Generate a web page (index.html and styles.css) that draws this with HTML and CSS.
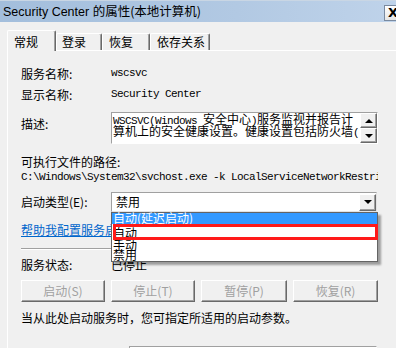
FILE: index.html
```html
<!DOCTYPE html>
<html>
<head>
<meta charset="utf-8">
<link rel="stylesheet" href="styles.css">
</head>
<body>
<div class="window">
  <div class="titlebar">
    <span class="title"><span class="latin">Security Center </span>的属性(本地计算机)</span>
    <span class="close">X</span>
  </div>
  <div class="tabs">
    <div class="tab active">常规</div>
    <div class="tab t2">登录</div>
    <div class="tab t3">恢复</div>
    <div class="tab t4">依存关系</div>
  </div>
  <div class="panel">
    <div class="row"><span class="label">服务名称:</span><span class="mono">wscsvc</span></div>
    <div class="row"><span class="label">显示名称:</span><span class="mono">Security Center</span></div>
    <div class="desc-row">
      <span class="label desc-label">描述:</span>
      <div class="desc-box">
        <div class="desc-text">
          <div class="line"><span class="mono-s">WSCSVC(Windows </span>安全中心<span class="mono-s">)</span>服务监视并报告计</div>
          <div class="line">算机上的安全健康设置。健康设置包括防火墙<span class="mono-s">(</span></div>
        </div>
        <div class="scroll">
          <div class="sbtn"><span class="tri-up"></span></div>
          <div class="sbtn"><span class="tri-down"></span></div>
        </div>
      </div>
    </div>
    <div class="path-label">可执行文件的路径:</div>
    <div class="path mono">C:\Windows\System32\svchost.exe -k LocalServiceNetworkRestricted</div>
    <div class="combo-row">
      <span class="label">启动类型(E):</span>
      <div class="combo">
        <span class="combo-text">禁用</span>
        <div class="combo-btn"><span class="tri-down"></span></div>
      </div>
    </div>
    <div class="link">帮助我配置服务启动选项。</div>
    <div class="sep"></div>
    <div class="status-row"><span class="label">服务状态:</span><span>已停止</span></div>
    <div class="buttons">
      <div class="btn w84">启动(S)</div>
      <div class="btn w84">停止(T)</div>
      <div class="btn w86">暂停(P)</div>
      <div class="btn w85">恢复(R)</div>
    </div>
    <div class="note">当从此处启动服务时，您可指定所适用的启动参数。</div>
    <div class="param-box"></div>
  </div>
  <div class="dropdown">
    <div class="item selected">自动(延迟启动)</div>
    <div class="item i2">自动</div>
    <div class="item i3">手动</div>
    <div class="item i4">禁用</div>
  </div>
  <div class="highlight-box"></div>
</div>
</body>
</html>
```

FILE: styles.css
```css
html, body {
  margin: 0;
  padding: 0;
  background: #f0f0f0;
  overflow: hidden;
}
body {
  font-family: "Noto Sans CJK SC", "Noto Sans", sans-serif;
  font-size: 12px;
  color: #000;
  width: 396px;
  height: 348px;
}
.window {
  position: relative;
  width: 396px;
  height: 348px;
  overflow: hidden;
}
.titlebar {
  height: 22px;
  background: linear-gradient(to right, #a3bedc, #b2c9e3 60%, #bfd3ea);
  border-top: 1px solid #c9d6e4;
  box-sizing: border-box;
  display: flex;
  align-items: center;
  justify-content: space-between;
}
.title {
  padding-left: 3px;
  line-height: 20px;
  font-size: 12.5px;
  white-space: nowrap;
}
.title .latin {
  font-family: "Liberation Sans", sans-serif;
  font-size: 12.5px;
}
.close {
  width: 16px;
  height: 16px;
  margin-top: 2px;
  margin-right: -4px;
  box-sizing: border-box;
  border: 1px solid #7a8aa0;
  background: linear-gradient(#ffffff, #e6e6e6);
  font-family: "DejaVu Sans", sans-serif;
  font-weight: bold;
  font-size: 13px;
  line-height: 14px;
  text-align: center;
  padding-left: 2px;
}
.tabs {
  display: flex;
  align-items: flex-end;
  height: 28px;
  padding-left: 7px;
  position: relative;
  z-index: 2;
}
.tab {
  box-sizing: border-box;
  height: 17px;
  line-height: 16px;
  border-top: 1px solid #fff;
  border-left: 1px solid #fff;
  border-right: 1px solid #696969;
  box-shadow: inset -1px 0 #a0a0a0;
  border-radius: 2px 2px 0 0;
  padding-left: 5px;
  background: #f0f0f0;
  white-space: nowrap;
}
.tab.active {
  width: 49px;
  height: 21px;
  padding-top: 3px;
  padding-left: 6px;
  margin-bottom: -1px;
}
.tab.t2 { width: 46px; }
.tab.t3 { width: 48px; padding-left: 6px; }
.tab.t4 { width: 60px; padding-left: 6px; }

.panel {
  margin-left: 7px;
  width: 400px;
  height: 300px;
  box-sizing: border-box;
  border-top: 1px solid #fff;
  border-left: 1px solid #fff;
  padding: 12px 0 0 13px;
}
.row {
  display: flex;
  height: 21px;
  line-height: 21px;
}
.label {
  width: 90px;
  flex: none;
  white-space: nowrap;
}
.mono {
  font-family: "Liberation Mono", monospace;
  font-size: 11px;
  letter-spacing: -0.6px;
}
.mono-s {
  font-family: "Liberation Mono", monospace;
  font-size: 11px;
  letter-spacing: -0.6px;
}
.desc-row {
  display: flex;
  margin-top: 7px;
}
.desc-label {
  line-height: 22px;
  padding-top: 1px;
}
.desc-box {
  width: 267px;
  height: 32px;
  box-sizing: border-box;
  border: 1px solid;
  border-color: #a0a0a0 #fff #fff #a0a0a0;
  background: #fff;
  display: flex;
}
.desc-text {
  flex: 1;
  overflow: hidden;
  padding-left: 1px;
  line-height: 12px;
}
.line {
  white-space: nowrap;
  height: 12px;
  line-height: 12px;
}
.scroll {
  width: 17px;
  display: flex;
  flex-direction: column;
}
.sbtn, .combo-btn {
  box-sizing: border-box;
  height: 15px;
  background: #f0f0f0;
  border: 1px solid;
  border-color: #fff #696969 #696969 #fff;
  box-shadow: inset -1px -1px #a0a0a0;
  display: flex;
  align-items: center;
  justify-content: center;
}
.tri-up {
  width: 0;
  height: 0;
  border-left: 4px solid transparent;
  border-right: 4px solid transparent;
  border-bottom: 4px solid #000;
}
.tri-down {
  width: 0;
  height: 0;
  border-left: 4px solid transparent;
  border-right: 4px solid transparent;
  border-top: 4px solid #000;
}
.path-label {
  margin-top: 10px;
  line-height: 16px;
  height: 16px;
}
.path {
  line-height: 14px;
  height: 14px;
  width: 357px;
  overflow: hidden;
  white-space: nowrap;
}
.combo-row {
  display: flex;
  margin-top: 8px;
  height: 20px;
  line-height: 20px;
}
.combo {
  width: 266px;
  height: 20px;
  box-sizing: border-box;
  border: 1px solid;
  border-color: #a0a0a0 #e3e3e3 #e3e3e3 #a0a0a0;
  background: #fff;
  display: flex;
  justify-content: space-between;
  align-items: center;
}
.combo-text {
  padding-left: 4px;
  line-height: 18px;
}
.combo-btn {
  width: 17px;
  height: 17px;
  margin-right: 0;
}
.link {
  margin-top: 10px;
  line-height: 16px;
  height: 16px;
  color: #0066cc;
  text-decoration: underline;
  white-space: nowrap;
}
.sep {
  margin-top: 10px;
  width: 357px;
  border-top: 1px solid #a0a0a0;
  border-bottom: 1px solid #fff;
}
.status-row {
  display: flex;
  margin-top: 7px;
  line-height: 16px;
  height: 16px;
}
.buttons {
  display: flex;
  gap: 6px;
  margin-top: 7px;
}
.btn {
  height: 22px;
  box-sizing: border-box;
  border: 1px solid;
  border-color: #fff #696969 #696969 #fff;
  box-shadow: inset -1px -1px #a0a0a0;
  color: #a0a0a0;
  text-align: center;
  line-height: 19px;
  white-space: nowrap;
}
.w84 { width: 84px; }
.w85 { width: 85px; }
.w86 { width: 86px; }
.note {
  margin-top: 8px;
  line-height: 16px;
  height: 16px;
  white-space: nowrap;
}
.param-box {
  margin-top: 20px;
  margin-left: 108px;
  width: 248px;
  height: 20px;
  box-sizing: border-box;
  border: 1px solid;
  border-color: #a0a0a0 #fff #fff #a0a0a0;
  background: #fff;
}
.dropdown {
  position: absolute;
  left: 111px;
  top: 212px;
  width: 267px;
  box-sizing: border-box;
  border: 1px solid #646464;
  background: #fff;
  box-shadow: 3px 3px 2px rgba(0, 0, 0, 0.35);
  z-index: 5;
}
.item {
  height: 12px;
  line-height: 12px;
  padding-left: 1px;
  white-space: nowrap;
}
.item.selected {
  background: #3399ff;
  color: #fff;
  height: 11px;
  line-height: 10px;
}
.item.i2 { height: 13px; line-height: 17px; }
.item.i3 { height: 12px; line-height: 16px; }
.item.i4 { height: 12px; line-height: 12px; }
.highlight-box {
  position: absolute;
  left: 113px;
  top: 224px;
  width: 265px;
  height: 16px;
  box-sizing: border-box;
  border: 3px solid #ff1a1a;
  z-index: 6;
}
```
